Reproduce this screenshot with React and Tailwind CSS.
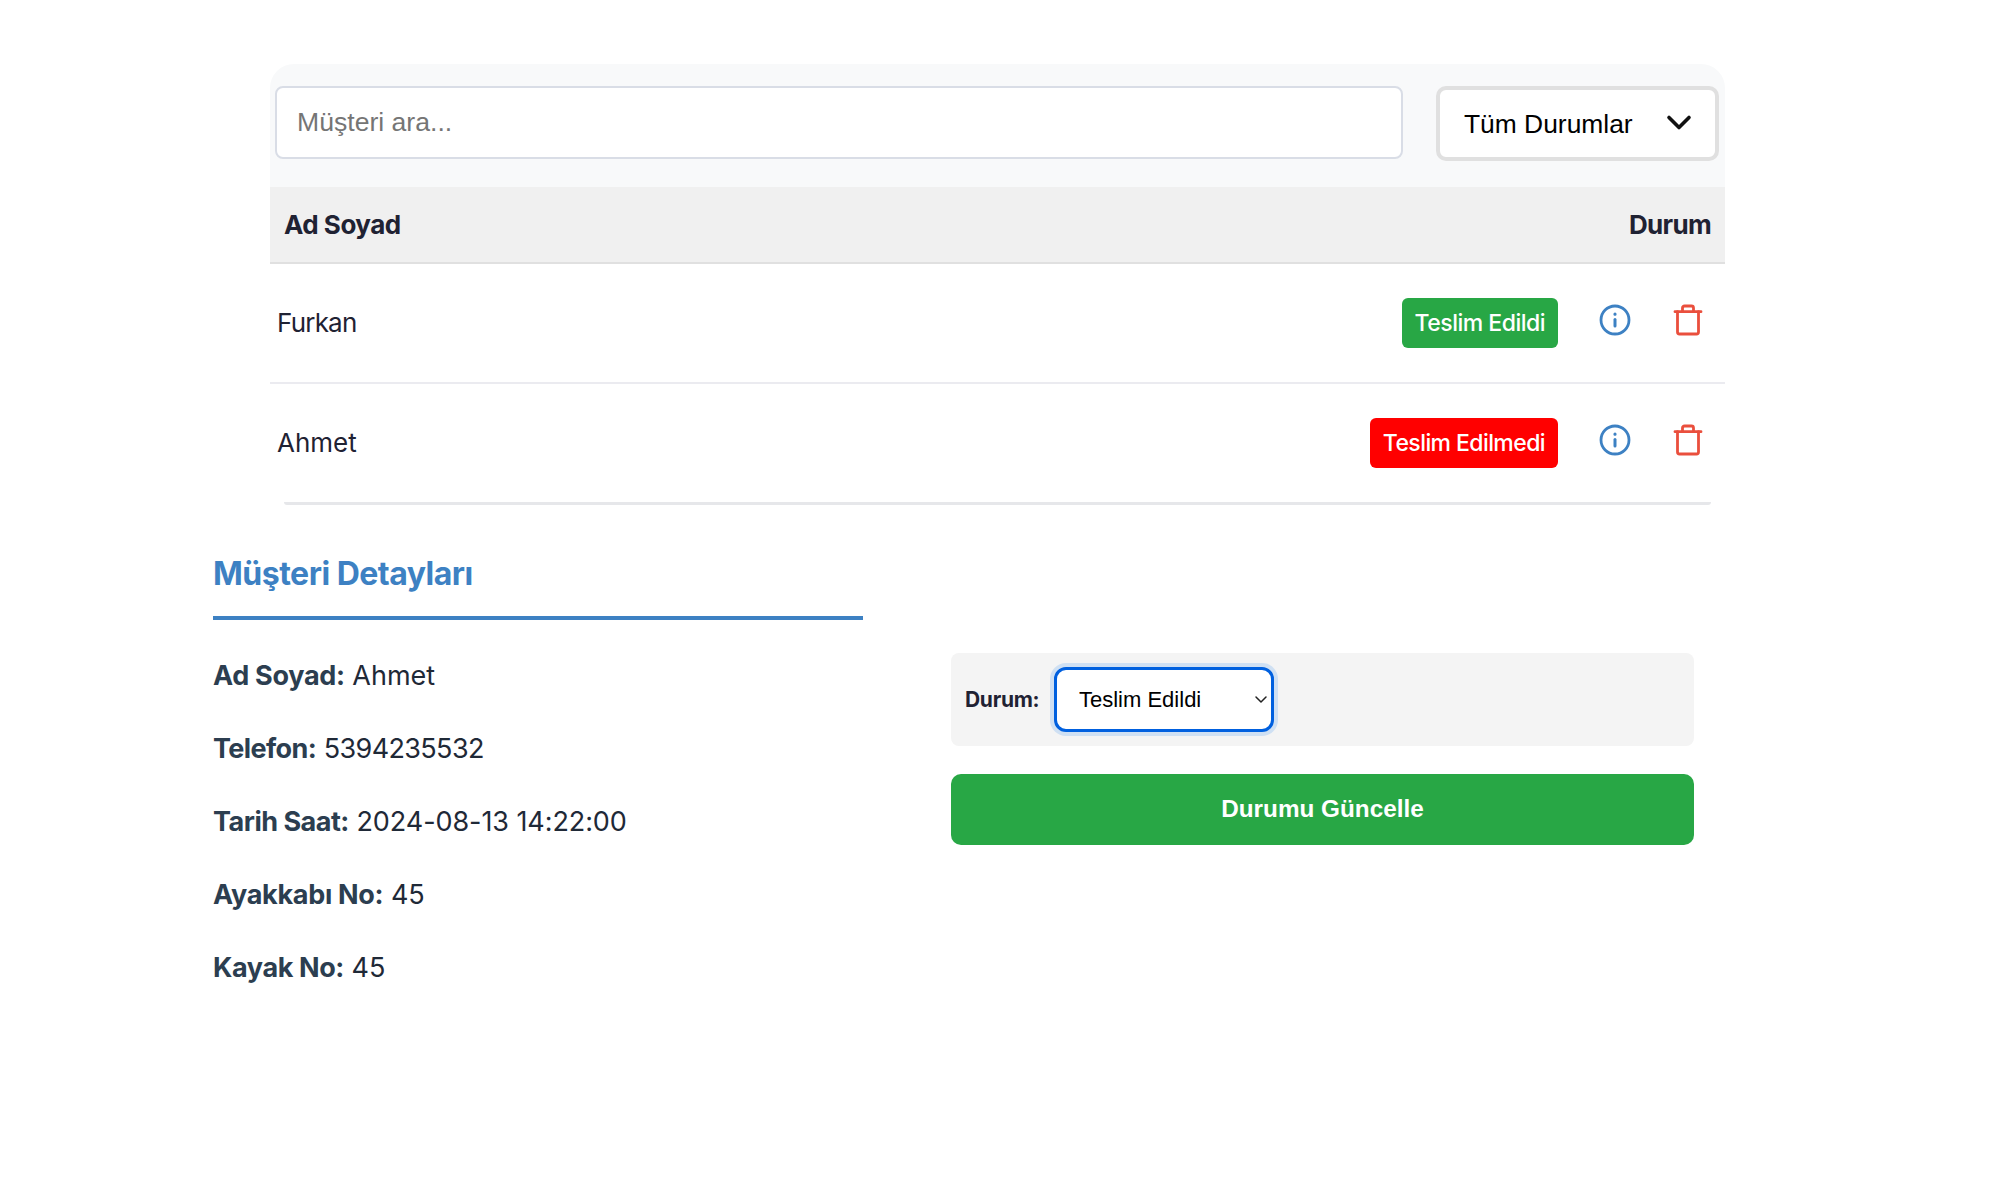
import React from "react";

const fig = "font-['Inter','Noto_Sans',sans-serif]";
const lib = "font-['Liberation_Sans',Arial,sans-serif]";

function Info() {
  return (
    <svg width="34" height="34" viewBox="0 0 34 34" fill="none" stroke="#3d81c3" strokeWidth="2.8" strokeLinecap="round" strokeLinejoin="round">
      <circle cx="17" cy="17" r="14" />
      <path d="M17 16.5v6.5" strokeWidth="3" />
      <circle cx="17" cy="11.2" r="1" fill="#3d81c3" strokeWidth="1.2" />
    </svg>
  );
}

function Trash() {
  return (
    <svg width="34" height="34" viewBox="0 0 34 34" fill="none" stroke="#ea4f3d" strokeWidth="2.8" strokeLinecap="round" strokeLinejoin="round">
      <path d="M4 8.7h26" />
      <path d="M6.5 8.7V29a2 2 0 0 0 2 2h17a2 2 0 0 0 2-2V8.7" />
      <path d="M11.5 8.7V5a2 2 0 0 1 2-2h7a2 2 0 0 1 2 2v3.7" />
    </svg>
  );
}

function Row({ name, status, color, border, height, track, badgeTrack }) {
  return (
    <div className={`flex items-center pl-[7px] pr-[20px] ${height} ${border}`}>
      <span className={`mb-[2px] text-[26px] text-[#1f2233] ${track} ${fig}`}>{name}</span>
      <span className={`ml-auto flex h-[50px] items-center rounded-[6px] px-[13px] text-[23px] font-medium text-white ${badgeTrack} ${color} ${fig}`}>{status}</span>
      <span className="mb-[6px] ml-[40px] flex w-[34px] justify-center"><Info /></span>
      <span className="mb-[6px] ml-[39px] flex w-[34px] justify-center"><Trash /></span>
    </div>
  );
}

function Line({ label, value, labelTrack, valueTrack }) {
  return (
    <p className={`h-[73px] text-[27px] leading-[40px] text-[#1f2937] ${fig}`}>
      <strong className={`font-bold text-[#2c3e50] ${labelTrack}`}>{label}:</strong> <span className={valueTrack}>{value}</span>
    </p>
  );
}

export default function App() {
  return (
    <div className="min-h-[1200px] bg-white pt-[64px]">
      <div className="ml-[270px] w-[1455px]">
        <div className="flex h-[123px] items-start gap-[33px] rounded-t-[24px] bg-[#f8f9fa] pl-[5px] pr-[6px] pt-[22px]">
          <input
            placeholder="Müşteri ara..."
            className={`h-[73px] flex-1 rounded-[8px] border-2 border-[#d9dde6] bg-white px-[20px] text-[26.6px] outline-none placeholder:text-[#757575] ${lib}`}
          />
          <div className="relative h-[75px] w-[283px]">
            <select className={`h-full w-full appearance-none rounded-[10px] border-4 border-[#e0e0e0] bg-white pl-[24px] pt-[2px] text-[26.4px] text-black outline-none ${lib}`}>
              <option>Tüm Durumlar</option>
            </select>
            <svg className="pointer-events-none absolute right-[27px] top-[27px]" width="26" height="20" viewBox="0 0 26 20" fill="none" stroke="#111" strokeWidth="3.6" strokeLinecap="round" strokeLinejoin="round">
              <path d="M3 4.5l10 10 10-10" />
            </svg>
          </div>
        </div>
        <div className="flex h-[77px] items-center justify-between border-b-2 border-[#e0e0e0] bg-[#f0f0f0] pl-[14px] pr-[14px]">
          <span className={`text-[26px] font-bold tracking-[-0.5px] text-[#1f2233] ${fig}`}>Ad Soyad</span>
          <span className={`text-[26px] font-bold tracking-[-0.7px] text-[#1f2233] ${fig}`}>Durum</span>
        </div>
        <Row name="Furkan" status="Teslim Edildi" color="bg-[#28a745]" border="border-b-2 border-[#ebebf0]" height="h-[120px]" track="tracking-[-0.8px]" badgeTrack="tracking-[-0.5px]" />
        <Row name="Ahmet" status="Teslim Edilmedi" color="bg-[#ff0000]" border="" height="h-[118px]" track="" badgeTrack="tracking-[-0.58px]" />
        <div className="mx-[14px] h-[3px] rounded-b-[12px] bg-[#e6e7ea]" />
      </div>

      <div className="ml-[213px] mt-[46px] flex items-start">
        <div className="w-[650px]">
          <h2 className={`border-b-4 border-[#3d81c3] pb-[19px] text-[32px] font-bold leading-[46px] tracking-[-0.5px] text-[#3d81c3] ${fig}`}>Müşteri Detayları</h2>
          <div className="pt-[36px]">
            <Line label="Ad Soyad" value="Ahmet" labelTrack="tracking-[-0.3px]" valueTrack="" />
            <Line label="Telefon" value="5394235532" labelTrack="tracking-[-0.6px]" valueTrack="tracking-[-0.64px]" />
            <Line label="Tarih Saat" value="2024-08-13 14:22:00" labelTrack="tracking-[-0.5px]" valueTrack="tracking-[-0.08px]" />
            <Line label="Ayakkabı No" value="45" labelTrack="tracking-[-0.3px]" valueTrack="" />
            <Line label="Kayak No" value="45" labelTrack="tracking-[-0.4px]" valueTrack="" />
          </div>
        </div>
        <div className="ml-[88px] mt-[102px] w-[743px]">
          <div className="flex h-[93px] items-center rounded-[8px] bg-[#f4f4f4] pl-[14px]">
            <span className={`w-[75px] text-[21px] font-bold tracking-[-0.3px] text-[#1f2233] ${fig}`}>Durum:</span>
            <div className="relative ml-[14px] h-[65px] w-[220px]">
              <select className={`h-full w-full appearance-none rounded-[12px] border-[3px] border-[#0060df] bg-white pl-[22px] text-[22px] text-black shadow-[0_0_0_4px_#cfe0f3] outline-none ${lib}`}>
                <option>Teslim Edildi</option>
              </select>
              <svg className="pointer-events-none absolute right-[6px] top-[28px]" width="14" height="10" viewBox="0 0 14 10" fill="none" stroke="#222" strokeWidth="1.5" strokeLinecap="round" strokeLinejoin="round">
                <path d="M2 2l5 5 5-5" />
              </svg>
            </div>
          </div>
          <button className={`mt-[28px] h-[71px] w-full rounded-[10px] bg-[#28a745] text-[24.3px] font-bold text-white ${lib}`}>Durumu Güncelle</button>
        </div>
      </div>
    </div>
  );
}
